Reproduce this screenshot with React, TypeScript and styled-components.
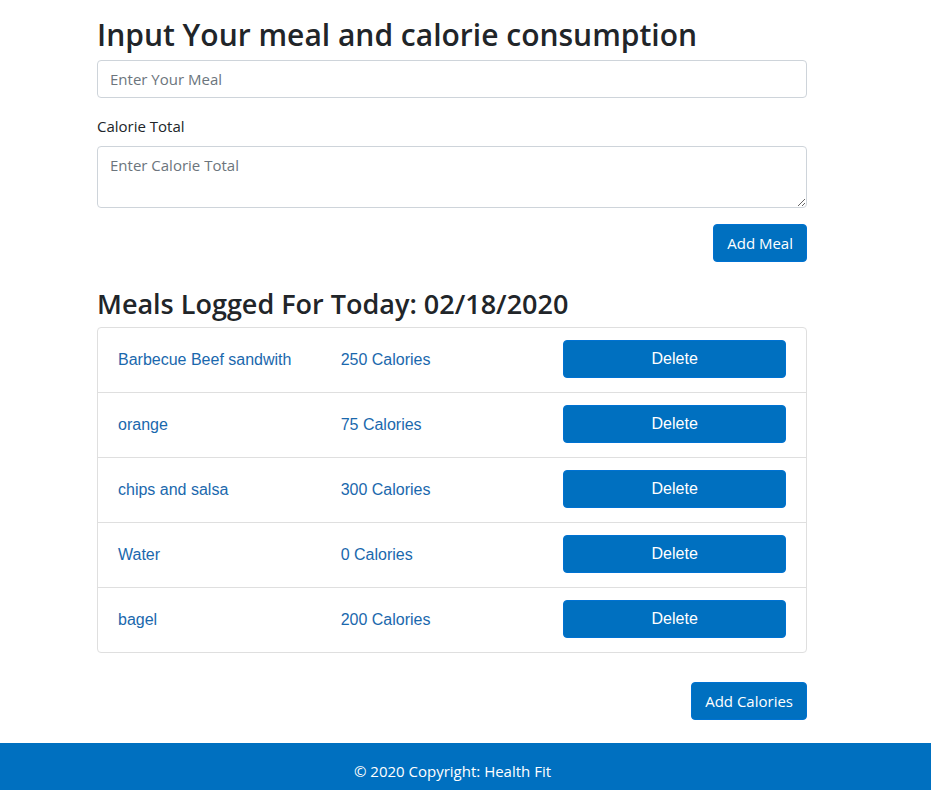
import React, { useState } from "react";
import styled, { createGlobalStyle } from "styled-components";

const uiFont = `"Segoe UI", "Open Sans", "Noto Sans", sans-serif`;
const listFont = `"Liberation Sans", Arial, sans-serif`;

const GlobalStyle = createGlobalStyle`
  *, *::before, *::after { box-sizing: border-box; }
  body {
    margin: 0;
    background: #fff;
    color: #212529;
    font-family: ${uiFont};
    font-size: 15px;
    line-height: 24px;
  }
`;

const Page = styled.div`
  display: flex;
  flex-direction: column;
`;

const Main = styled.main`
  padding: 16px 124px 23px 97px;
`;

const Title = styled.h1`
  margin: 0 0 6px;
  font-size: 30px;
  font-weight: 600;
  line-height: 38px;
`;

const Subtitle = styled.h2`
  margin: 24px 0 6px;
  font-size: 27px;
  font-weight: 600;
  line-height: 35px;
`;

const Field = styled.div`
  margin-bottom: 16px;
`;

const Label = styled.label`
  display: block;
  margin-bottom: 8px;
`;

const Control = styled.input`
  display: block;
  width: 100%;
  height: 38px;
  padding: 6px 12px;
  border: 1px solid #ced4da;
  border-radius: 4px;
  background: #fff;
  color: #495057;
  font: inherit;

  &::placeholder {
    color: #6c757d;
    opacity: 1;
  }
`;

const TextArea = styled(Control)`
  height: 62px;
  resize: vertical;
`;

const Actions = styled.div`
  display: flex;
  justify-content: flex-end;
`;

const Button = styled.button`
  height: 38px;
  padding: 6px 13px;
  border: 1px solid #0072d2;
  border-radius: 4px;
  background: #0070c0;
  color: #fff;
  font: inherit;
  cursor: pointer;
`;

const DeleteButton = styled(Button)`
  width: 100%;
  font-family: ${listFont};
  font-size: 16px;
`;

const MealList = styled.ul`
  margin: 0 0 29px;
  padding: 0;
  border: 1px solid #dfdfdf;
  border-radius: 4px;
  list-style: none;
`;

const MealRow = styled.li`
  display: grid;
  grid-template-columns: repeat(3, 1fr);
  align-items: center;
  padding: 12px 20px 14px;

  & + & {
    border-top: 1px solid #dfdfdf;
  }
`;

const MealLink = styled.a`
  padding-top: 2px;
  color: #1a68ad;
  font-family: ${listFont};
  font-size: 16px;
  text-decoration: none;
`;

const Footer = styled.footer`
  padding: 16px 26px 7px 0;
  background: #0070c0;
  color: #fff;
  text-align: center;
`;

const initialMeals = [
  { name: "Barbecue Beef sandwith", calories: 250 },
  { name: "orange", calories: 75 },
  { name: "chips and salsa", calories: 300 },
  { name: "Water", calories: 0 },
  { name: "bagel", calories: 200 },
];

export default function App() {
  const [meals, setMeals] = useState(initialMeals);
  const [name, setName] = useState("");
  const [total, setTotal] = useState("");

  const addMeal = () => {
    if (!name) return;
    setMeals([...meals, { name, calories: Number(total) || 0 }]);
    setName("");
    setTotal("");
  };

  return (
    <Page>
      <GlobalStyle />
      <Main>
        <Title id="meal-title">Input Your meal and calorie consumption</Title>
        <Field>
          <Control
            aria-labelledby="meal-title"
            placeholder="Enter Your Meal"
            value={name}
            onChange={(e) => setName(e.target.value)}
          />
        </Field>
        <Field>
          <Label htmlFor="calories">Calorie Total</Label>
          <TextArea
            as="textarea"
            id="calories"
            placeholder="Enter Calorie Total"
            value={total}
            onChange={(e) => setTotal(e.target.value)}
          />
        </Field>
        <Actions>
          <Button type="button" onClick={addMeal}>Add Meal</Button>
        </Actions>
        <Subtitle>Meals Logged For Today: 02/18/2020</Subtitle>
        <MealList>
          {meals.map((meal, index) => (
            <MealRow key={index}>
              <MealLink href="#">{meal.name}</MealLink>
              <MealLink href="#">{meal.calories} Calories</MealLink>
              <DeleteButton
                type="button"
                onClick={() => setMeals(meals.filter((_, i) => i !== index))}
              >
                Delete
              </DeleteButton>
            </MealRow>
          ))}
        </MealList>
        <Actions>
          <Button type="button">Add Calories</Button>
        </Actions>
      </Main>
      <Footer>© 2020 Copyright: Health Fit</Footer>
    </Page>
  );
}
